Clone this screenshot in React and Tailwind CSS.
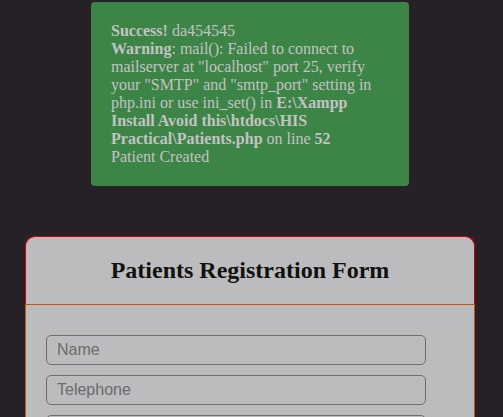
export default function App() {
  return (
    <div className="min-h-[417px] w-full bg-[#252127] overflow-hidden" style={{ fontFamily: '"Liberation Serif", serif' }}>
      <div className="pt-[2px] flex justify-center">
        <div className="ml-[-3px] w-[318px] h-[184px] rounded-[4px] bg-[#3d8447] px-[20px] pt-[20px] text-[16px] leading-[18px] text-[#c3c3c3]">
          <div><b>Success!</b> da454545</div>
          <div>
            <b>Warning</b>: mail(): Failed to connect to mailserver at "localhost" port 25, verify your "SMTP" and "smtp_port" setting in php.ini or use ini_set() in <b>E:\Xampp Install Avoid this\htdocs\HIS Practical\Patients.php</b> on line <b>52</b>
          </div>
          <div>Patient Created</div>
        </div>
      </div>
      <div className="mt-[50px] flex justify-center">
        <div className="ml-[-3px] w-[450px]">
          <div className="h-[68px] rounded-t-[10px] border border-b-0 border-solid border-[#d40000] bg-[#bcbcbe] flex items-center justify-center">
            <h2 className="text-[24px] font-bold text-[#111] mt-[-1px]">Patients Registration Form</h2>
          </div>
          <div className="border border-solid border-[#c4560c] border-t-[#c4560c] bg-[#bcbcbe] px-[20px] pt-[30px] pb-[20px] flex flex-col gap-[10px]" style={{ fontFamily: '"Liberation Sans", Arial, sans-serif' }}>
            <input className="w-[380px] h-[30px] rounded-[5px] border border-[#6e6e6e] bg-transparent px-[10px] text-[16px] text-[#333] placeholder:text-[#6b6b6b] outline-none" placeholder="Name" />
            <input className="w-[380px] h-[30px] rounded-[5px] border border-[#6e6e6e] bg-transparent px-[10px] text-[16px] text-[#333] placeholder:text-[#6b6b6b] outline-none" placeholder="Telephone" />
            <input className="w-[380px] h-[30px] rounded-[5px] border border-[#6e6e6e] bg-transparent px-[10px] text-[16px] text-[#333] placeholder:text-[#6b6b6b] outline-none" placeholder="Address" />
          </div>
        </div>
      </div>
    </div>
  );
}
